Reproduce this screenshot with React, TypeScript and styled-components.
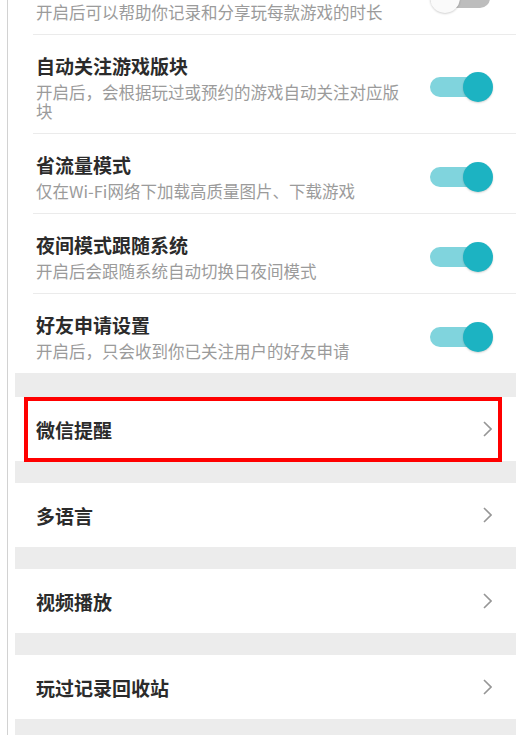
import styled, { createGlobalStyle } from 'styled-components';

const GlobalStyle = createGlobalStyle`
  html, body {
    margin: 0;
    padding: 0;
    background: #ffffff;
  }
  body {
    font-family: 'Noto Sans CJK SC', 'Noto Sans', 'Liberation Sans', sans-serif;
    overflow: hidden;
  }
`;

// left margin with the thin window edge, then the settings panel
const Frame = styled.div`
  height: 735px;
  overflow: hidden;
  margin-left: 7px;
  border-left: 1px solid #d2d2d2;
  padding-left: 7px;
`;

// list is scrolled a little, so the first row is cut off at the top
const Scroller = styled.div`
  margin-top: -45px;
  display: flex;
  flex-direction: column;
`;

const ToggleRow = styled.div<{ $last?: boolean }>`
  display: flex;
  align-items: center;
  margin-left: 18px;
  padding: 18px 23px 12px 3px;
  border-bottom: ${(p) => (p.$last ? 'none' : '1px solid #ebebeb')};
`;

const RowText = styled.div`
  flex: 1;
  min-width: 0;
  display: flex;
  flex-direction: column;
  gap: 4px;
`;

const Title = styled.div`
  min-height: 26px;
  font-size: 19px;
  line-height: 26px;
  font-weight: 700;
  color: #2b2b2b;
`;

const Desc = styled.div`
  font-size: 16.5px;
  line-height: 19px;
  color: #9b9b9b;
`;

const Switch = styled.div<{ $on: boolean }>`
  position: relative;
  flex: none;
  width: 63px;
  height: 30px;
  margin-left: 20px;
  display: flex;
  align-items: center;
  justify-content: ${(p) => (p.$on ? 'flex-end' : 'flex-start')};
`;

const Track = styled.div<{ $on: boolean }>`
  position: absolute;
  left: 0;
  right: 3px;
  top: 5px;
  height: 20px;
  border-radius: 10px;
  background: ${(p) => (p.$on ? '#80d4dd' : '#bdbdbd')};
`;

const Thumb = styled.div<{ $on: boolean }>`
  position: relative;
  width: 30px;
  height: 30px;
  border-radius: 50%;
  background: ${(p) => (p.$on ? '#1cb3c2' : '#fafafa')};
  box-shadow: 0 1px 2px rgba(0, 0, 0, 0.18);
`;

const Band = styled.div<{ $h: number }>`
  height: ${(p) => p.$h}px;
  background: #ececec;
`;

const NavRow = styled.div`
  position: relative;
  height: 64px;
  display: flex;
  align-items: center;
  padding: 0 24px 0 21px;
  background: #ffffff;
`;

const NavTitle = styled.div`
  flex: 1;
  font-size: 19px;
  font-weight: 700;
  color: #2b2b2b;
`;

const Highlight = styled.div`
  position: absolute;
  left: 9px;
  right: 14px;
  top: 0;
  bottom: -1px;
  border: 4px solid #ff0000;
  pointer-events: none;
`;

const Chevron = () => (
  <svg width="9" height="16" viewBox="0 0 9 16" fill="none">
    <polyline points="1,1 8,8 1,15" stroke="#969696" strokeWidth="1.6" />
  </svg>
);

// first row sits above the top edge, only its description shows
const toggles = [
  { title: '', desc: '开启后可以帮助你记录和分享玩每款游戏的时长', on: false },
  { title: '自动关注游戏版块', desc: '开启后，会根据玩过或预约的游戏自动关注对应版块', on: true },
  { title: '省流量模式', desc: '仅在Wi-Fi网络下加载高质量图片、下载游戏', on: true },
  { title: '夜间模式跟随系统', desc: '开启后会跟随系统自动切换日夜间模式', on: true },
  { title: '好友申请设置', desc: '开启后，只会收到你已关注用户的好友申请', on: true },
];

const links = [
  { title: '微信提醒', marked: true },
  { title: '多语言' },
  { title: '视频播放' },
  { title: '玩过记录回收站' },
];

export default function App() {
  return (
    <>
      <GlobalStyle />
      <Frame>
        <Scroller>
          {toggles.map((t, i) => (
            <ToggleRow key={i} $last={i === toggles.length - 1}>
              <RowText>
                <Title>{t.title}</Title>
                <Desc>{t.desc}</Desc>
              </RowText>
              <Switch $on={t.on}>
                <Track $on={t.on} />
                <Thumb $on={t.on} />
              </Switch>
            </ToggleRow>
          ))}
          <Band $h={24} />
          {links.map((l) => (
            <div key={l.title}>
              <NavRow>
                <NavTitle>{l.title}</NavTitle>
                <Chevron />
                {l.marked && <Highlight />}
              </NavRow>
              <Band $h={22} />
            </div>
          ))}
        </Scroller>
      </Frame>
    </>
  );
}
